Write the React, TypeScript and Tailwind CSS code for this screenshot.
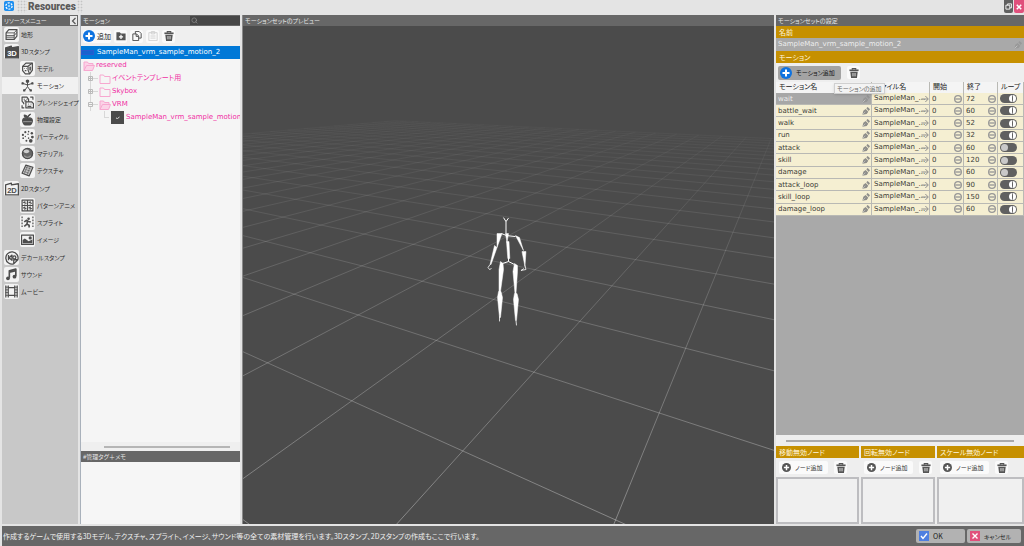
import React from "react";
import { Search } from "lucide-react";

type IconProps = { className?: string };

const LATIN = "font-['DejaVu_Sans','Noto_Sans_CJK_JP',sans-serif]";

/* ---------- icons ---------- */

const Svg = ({ className = "size-[13px]", children }: { className?: string; children: React.ReactNode }) => (
  <svg viewBox="0 0 24 24" className={`${className} shrink-0`} fill="none" stroke="currentColor" strokeWidth={2.2} strokeLinejoin="round" aria-hidden="true">
    {children}
  </svg>
);

const TerrainIcon = () => (
  <Svg>
    <path d="M2 9l5-6h15v12l-5 6H2z" />
    <path d="M2 9h15v12M17 9l5-6M2 14h15l5-6M2 17h15" strokeWidth={1.6} />
  </Svg>
);

const StampIcon = ({ label, filled }: { label: string; filled?: boolean }) => (
  <Svg className="size-[14px]">
    <path d="M1 22V5l10-3v3l12-2v19z" fill={filled ? "currentColor" : "none"} />
    <text x="12" y="19" fontSize="13" fontWeight="700" textAnchor="middle" fill={filled ? "#fff" : "currentColor"} stroke="none" fontFamily="Liberation Sans, sans-serif">
      {label}
    </text>
  </Svg>
);

const ModelIcon = () => (
  <Svg>
    <path d="M3 8l6-6h12v13l-5 7H8l-5-6z" />
    <path d="M13 8h-10M13 8l8-6M13 8v7l3 7" />
    <path d="M16 9h2v6h-2z" fill="currentColor" strokeWidth={1} />
    <path d="M6 12h1M10 12h1M7 16h3" />
  </Svg>
);

const MotionIcon = () => (
  <Svg>
    <circle cx="12" cy="4" r="2.200" fill="currentColor" />
    <path d="M12 6v8M3 8l9 3 9-3M12 14l-5 7M12 14l5 7" strokeWidth={1.8} />
    <path d="M2 7h2v2H2zM20 7h2v2h-2zM5 20h2v2H5zM17 20h2v2h-2z" fill="currentColor" />
  </Svg>
);

const BlendIcon = () => (
  <Svg>
    <path d="M2 10V2h9l3 4v4M2 10l3 3v2M5 6h2M10 6h2M6 9h4M9 22V11h11l3 3v8zM13 15h1M18 15h1M12 19h7M17 2h5v5M2 17v5h4" />
  </Svg>
);

const PhysicsIcon = () => (
  <Svg>
    <path d="M3 14c0-5 5-6 9-4 4-2 9-1 9 4 0 4-3 8-5 8H8c-2 0-5-4-5-8z" fill="currentColor" />
    <path d="M12 10c0-4 2-6 6-8M11 8C8 8 6 6 6 4c3 0 5 1 5 4z" fill="currentColor" />
    <path d="M4 16h16" stroke="#aaa" strokeWidth={1.5} />
  </Svg>
);

const ParticleIcon = () => (
  <Svg>
    <g fill="currentColor" stroke="none">
      <circle cx="3.500" cy="9" r="2" />
      <circle cx="8" cy="4" r="2" />
      <circle cx="14" cy="3" r="1.400" />
      <circle cx="20" cy="6" r="2.200" />
      <circle cx="21" cy="13" r="2.600" />
      <circle cx="18" cy="20" r="3.400" />
      <circle cx="10" cy="20" r="1.800" />
      <circle cx="4" cy="15" r="1.600" />
      <circle cx="14" cy="15" r="1.400" />
      <circle cx="13" cy="8" r="1.400" />
      <circle cx="8" cy="12" r="1.200" />
    </g>
  </Svg>
);

const MaterialIcon = () => (
  <Svg>
    <circle cx="12" cy="12" r="9.500" fill="#666" />
    <ellipse cx="10" cy="8" rx="5" ry="3.600" fill="#ccc" stroke="none" />
    <path d="M6 16c3 4 9 4 12 0" stroke="#999" />
  </Svg>
);

const TextureIcon = () => (
  <Svg>
    <path d="M9 2l13 4-7 16L2 17z" fill="#c8c8c8" />
    <path d="M9 6l9 3M8 10l9 3M6 14l9 3M12 3L6 18M17 5l-6 15" strokeWidth={1} />
  </Svg>
);

const PatternIcon = () => (
  <Svg>
    <path d="M2 2h20v20H2zM12 2v20M2 12h20" />
    <path d="M7 4v6M4 6l6 2M17 4v6M14 6l6 2M7 14v6M4 16l6 2M17 14v6M14 16l6 2" />
  </Svg>
);

const SpriteIcon = () => (
  <Svg>
    <path d="M2 1v22M22 1v22" strokeDasharray="3 2.500" />
    <circle cx="14" cy="5" r="2.400" fill="currentColor" stroke="none" />
    <path d="M6 11l4-3 4 2 4 1M12 9l-1 6 4 2v4M11 15l-5 4" strokeWidth={3} />
  </Svg>
);

const ImageIcon = () => (
  <Svg>
    <path d="M1 4h22v17H1z" />
    <path d="M3 19v-6l4-3 4 3 3 2 7-3v7z" fill="currentColor" stroke="none" />
    <circle cx="17" cy="9" r="3" fill="currentColor" stroke="none" />
  </Svg>
);

const DecalIcon = () => (
  <Svg className="size-[14px]">
    <path d="M15 22a10.500 10.500 0 1 1 7-7zM15 22v-7h7" />
    <path d="M6 7v9M12 7v9l-5-4.500z" />
    <circle cx="16" cy="11" r="2.600" />
  </Svg>
);

const SoundIcon = () => (
  <Svg>
    <path d="M8 18V5l12-3v13M8 8l12-3" strokeWidth={3} />
    <circle cx="5.500" cy="19" r="3.500" fill="currentColor" stroke="none" />
    <circle cx="17.500" cy="16" r="3.500" fill="currentColor" stroke="none" />
  </Svg>
);

const MovieIcon = () => (
  <Svg>
    <path d="M6 1v22M18 1v22M6 5h12M6 19h12M1.500 1v22M22.500 1v22" />
    <path d="M1 4h5M1 9h5M1 14h5M1 19h5M18 4h5M18 9h5M18 14h5M18 19h5" strokeWidth={1.6} />
  </Svg>
);

const AppLogo = () => (
  <svg viewBox="0 0 24 24" className="mt-px size-[10px]" aria-hidden="true">
    <rect width="24" height="24" rx="4" fill="#1e8ff0" />
    <circle cx="12" cy="12" r="7.500" fill="none" stroke="#fff" strokeWidth="3" strokeDasharray="5 2.800" />
    <circle cx="12" cy="12" r="3" fill="#8fd0ff" />
  </svg>
);

const PlusDisc = ({ className = "size-3", color }: IconProps & { color: string }) => (
  <svg viewBox="0 0 24 24" className={`${className} shrink-0`} aria-hidden="true">
    <circle cx="12" cy="12" r="12" fill={color} />
    <path d="M12 5v14M5 12h14" stroke="#fff" strokeWidth="4" />
  </svg>
);

const TrashIcon = () => (
  <svg viewBox="0 0 24 24" className="size-[10px]" fill="none" stroke="currentColor" aria-hidden="true">
    <path d="M1 5.500h22" strokeWidth="4" />
    <path d="M8 4V1.500h8V4" strokeWidth="3" />
    <path d="M3 9h18l-2 15H5z" fill="currentColor" stroke="none" />
    <path d="M9 12v8M12 12v8M15 12v8" stroke="#eee" strokeWidth="1.500" />
  </svg>
);

const FolderAddIcon = () => (
  <svg viewBox="0 0 24 24" className="size-[10px]" aria-hidden="true">
    <path d="M1 3h8l3 3h11v16H1z" fill="#555" />
    <path d="M12 9v10M7 14h10" stroke="#fff" strokeWidth="3" />
  </svg>
);

const DuplicateIcon = () => (
  <Svg className="size-[10px]">
    <path d="M8 7V1h9l5 5v11h-6M2 7h9l5 5v11H2zM10 7v6h6" strokeWidth={2.4} />
  </Svg>
);

const PasteIcon = () => (
  <Svg className="size-[10px]">
    <path d="M2 4h20v19H2zM8 1h8v6H8zM6 12h12M6 17h12" />
  </Svg>
);

const Folder = ({ open }: { open?: boolean }) => (
  <svg viewBox="0 0 24 24" className="size-3 shrink-0" fill="none" stroke="#f7a8d0" strokeWidth={2} strokeLinejoin="round" aria-hidden="true">
    {open ? <path d="M2 21V4h7l2 3h9v4M2 21l5-10h16l-4 10z" fill="#fbd3e7" /> : <path d="M2 21V4h7l2 3h11v14z" />}
  </svg>
);

const Pencil = ({ className = "" }: IconProps) => (
  <svg viewBox="0 0 24 24" className={`size-2 shrink-0 ${className}`} fill="currentColor" aria-hidden="true">
    <path d="M1 23l3-12 7-5 8 8-5 7zM13 4l4-4 7 7-4 5z" />
    <path d="M2 22l8-8" stroke="#fff" strokeOpacity="0.600" strokeWidth="2" />
  </svg>
);

const Spinner = () => (
  <svg viewBox="0 0 24 24" className="size-2 shrink-0" aria-hidden="true">
    <circle cx="12" cy="12" r="10" fill="none" stroke="#979797" strokeWidth="4" />
    <path d="M4 12h16" stroke="#979797" strokeWidth="4" />
  </svg>
);

const ArrowRight = () => (
  <svg viewBox="0 0 24 24" className="size-2 shrink-0" fill="none" stroke="#8f8f8f" strokeWidth="3" aria-hidden="true">
    <path d="M1 12h20M13 3l9 9-9 9" />
  </svg>
);

/* ---------- shared pieces ---------- */

const TitleStrip = ({ children }: { children: React.ReactNode }) => (
  <div className="flex h-[11px] shrink-0 items-center bg-[#676767] pl-[2px] text-[6px] leading-none text-[#e6e6e6]">{children}</div>
);

const GoldBand = ({ children }: { children: React.ReactNode }) => (
  <h3 className="flex h-3 shrink-0 items-center bg-[#c69000] pl-[3px] text-[7px] leading-none whitespace-nowrap text-[#fff6dc]">{children}</h3>
);

const ToolButton = ({ label, className = "text-[#555]", children }: { label: string; className?: string; children: React.ReactNode }) => (
  <button type="button" aria-label={label} className={`flex size-[13px] items-center justify-center rounded-xs bg-[#fafafa] ${className}`}>
    {children}
  </button>
);

/* ---------- left menu ---------- */

type Item = { label: string; icon: React.ReactNode; active?: boolean; children?: Item[] };

const MENU: Item[] = [
  { label: "地形", icon: <TerrainIcon /> },
  {
    label: "3Dスタンプ",
    icon: <StampIcon label="3D" filled />,
    children: [
      { label: "モデル", icon: <ModelIcon /> },
      { label: "モーション", icon: <MotionIcon />, active: true },
      { label: "ブレンドシェイプ", icon: <BlendIcon /> },
      { label: "物理設定", icon: <PhysicsIcon /> },
      { label: "パーティクル", icon: <ParticleIcon /> },
      { label: "マテリアル", icon: <MaterialIcon /> },
      { label: "テクスチャ", icon: <TextureIcon /> },
    ],
  },
  {
    label: "2Dスタンプ",
    icon: <StampIcon label="2D" />,
    children: [
      { label: "パターンアニメ", icon: <PatternIcon /> },
      { label: "スプライト", icon: <SpriteIcon /> },
      { label: "イメージ", icon: <ImageIcon /> },
    ],
  },
  { label: "デカールスタンプ", icon: <DecalIcon /> },
  { label: "サウンド", icon: <SoundIcon /> },
  { label: "ムービー", icon: <MovieIcon /> },
];

const MenuRow = ({ item, nested }: { item: Item; nested?: boolean }) => (
  <a
    href="#"
    className={`flex h-[17px] items-center gap-[2px] text-[6px] whitespace-nowrap text-[#2e2e2e] ${nested ? "pl-[18px]" : "pl-[2px]"} ${item.active ? "bg-[#f1f1f1]" : ""}`}
  >
    <span className="flex size-[15px] shrink-0 items-center justify-center rounded-xs bg-[#f3f3f3] text-[#4d4d4d]">{item.icon}</span>
    {item.label}
  </a>
);

const SideMenu = () => (
  <nav className="flex w-[76px] shrink-0 flex-col bg-[#c8c8c8]">
    <TitleStrip>
      <span className="flex-1">リソースメニュー</span>
      <button type="button" aria-label="閉じる" className="mr-px flex h-[9px] w-[7px] items-center justify-center bg-[#e8e8e8] text-[#555]">
        <svg viewBox="0 0 8 10" className="h-2 w-[6px]" fill="none" stroke="currentColor" strokeWidth="1.600" aria-hidden="true">
          <path d="M6 1L2 5l4 4" />
        </svg>
      </button>
    </TitleStrip>
    <ul>
      {MENU.map((item) => (
        <li key={item.label}>
          <MenuRow item={item} />
          {item.children && (
            <ul className="mb-px">
              {item.children.map((c) => (
                <li key={c.label}>
                  <MenuRow item={c} nested />
                </li>
              ))}
            </ul>
          )}
        </li>
      ))}
    </ul>
  </nav>
);

/* ---------- motion list ---------- */

const Expander = ({ sign }: { sign: "+" | "-" }) => (
  <svg viewBox="0 0 10 13" className="h-[13px] w-[10px] shrink-0" fill="none" stroke="#bbb" aria-hidden="true">
    <path d="M2.500 0v4M2.500 9v4M5 6.500h5" stroke="#d8d8d8" />
    <path d="M0.500 4.500h4v4h-4zM1 6.500h3" />
    {sign === "+" && <path d="M2.500 5v3" />}
  </svg>
);

const MotionList = () => (
  <section className="flex w-40 shrink-0 flex-col border-l border-[#a9b1bb] bg-[#f5f5f5]">
    <TitleStrip>
      <span className="flex-1">モーション</span>
      <label className="flex h-[9px] w-[50px] items-center bg-[#464646] pl-px text-[#999]">
        <Search className="size-[7px] shrink-0" />
        <input aria-label="検索" className="w-full min-w-0 bg-transparent outline-none" />
      </label>
    </TitleStrip>
    <div className="flex h-5 shrink-0 items-center gap-[3px] bg-[#efefef] pl-[2px]">
      <button type="button" className="flex h-[13px] items-center gap-[2px] rounded-xs bg-[#fafafa] text-[7px] text-[#222]">
        <PlusDisc color="#0f73e0" />
        追加
      </button>
      <ToolButton label="フォルダ追加">
        <FolderAddIcon />
      </ToolButton>
      <ToolButton label="複製">
        <DuplicateIcon />
      </ToolButton>
      <ToolButton label="貼り付け" className="text-[#d0d0d0]">
        <PasteIcon />
      </ToolButton>
      <ToolButton label="削除">
        <TrashIcon />
      </ToolButton>
    </div>
    <ul className={`min-h-0 flex-1 overflow-hidden text-[7px] leading-[13px] whitespace-nowrap text-[#f02fa4] ${LATIN}`}>
      <li className="flex items-center gap-px bg-[#0078d7] text-white">
        <span className="flex h-[5px] w-[13px] shrink-0 items-center justify-center border border-[#2a5bd0] bg-[#1763cf]" />
        <span className="pl-[2px]">SampleMan_vrm_sample_motion_2</span>
      </li>
      <li className="flex items-center gap-px pl-[2px]">
        <Folder open />
        reserved
      </li>
      <li className="flex items-center gap-[1px] pl-[7px]">
        <Expander sign="+" />
        <Folder />
        イベントテンプレート用
      </li>
      <li className="flex items-center gap-[1px] pl-[7px]">
        <Expander sign="+" />
        <Folder />
        Skybox
      </li>
      <li className="flex items-center gap-[1px] pl-[7px]">
        <Expander sign="-" />
        <Folder open />
        VRM
      </li>
      <li className="flex items-center gap-[2px] pl-[23px]">
        <span className="mb-[6px] h-[7px] w-[5px] shrink-0 border-b border-l border-[#d8d8d8]" />
        <svg viewBox="0 0 13 13" className="size-[13px] shrink-0" aria-hidden="true">
          <rect width="13" height="13" fill="#4b4b4b" />
          <path d="M5 7l1.500 0.500 2-1.500" stroke="#ddd" fill="none" />
        </svg>
        SampleMan_vrm_sample_motion
      </li>
    </ul>
    <div className="flex h-[9px] shrink-0 items-center bg-[#efefef] pr-[10px] pl-[23px]">
      <div className="h-[2px] flex-1 bg-[#b5b5b5]" />
    </div>
    <div className="flex h-[73px] shrink-0 flex-col">
      <TitleStrip>
        <label htmlFor="memo">#管理タグ＋メモ</label>
      </TitleStrip>
      <textarea id="memo" className="w-full flex-1 resize-none bg-[#f6f6f6] outline-none" />
    </div>
  </section>
);

/* ---------- preview ---------- */

/* Ground-plane cell (i, j) to view coordinates. */
const project = (i: number, j: number): string => {
  const w = 1 + 0.1888 * i + 0.3265 * j;
  const x = (374.3 - 111.4 * i + 180.2 * j) / w - 1;
  const y = (430.9 - 0.83 * i - 1.45 * j) / w + 64;
  return `${x.toFixed(2)} ${y.toFixed(2)}`;
};

const GRID_FAR = 22;
const GRID_LINES = Array.from({ length: GRID_FAR + 2 }, (_, k) => k - 1);

const Preview = () => (
  <section className="flex min-w-0 flex-1 flex-col border-l border-[#8a8a8a] bg-[#4b4b4b]">
    <TitleStrip>モーションセットのプレビュー</TitleStrip>
    <div className="min-h-0 flex-1">
      <svg viewBox="0 0 532 499" preserveAspectRatio="xMidYMid slice" className="size-full" role="img" aria-label="プレビュー">
        <defs>
          <linearGradient id="fade" gradientUnits="userSpaceOnUse" x1="0" y1="95" x2="0" y2="499">
            <stop offset="0" stopColor="#fff" stopOpacity="0.020" />
            <stop offset="0.200" stopColor="#fff" stopOpacity="0.080" />
            <stop offset="0.500" stopColor="#fff" stopOpacity="0.200" />
            <stop offset="1" stopColor="#fff" stopOpacity="0.340" />
          </linearGradient>
        </defs>
        <g stroke="url(#fade)" strokeWidth="1">
          {GRID_LINES.map((k) => (
            <path key={k} d={`M${project(k, -1)}L${project(k, GRID_FAR)}M${project(-1, k)}L${project(GRID_FAR, k)}`} />
          ))}
        </g>
        <g transform="translate(227 179)" fill="#fff" stroke="#fff" strokeWidth="0.500" strokeLinejoin="round">
          <path d="M34 13l2.500 4 2.500-3.500M36.500 17v12" fill="none" strokeWidth="1" />
          <path d="M36 29h3l-1.500 9zM37 37h2.500l0.800 17h-2zM27.500 29h5l-5 14zM46 31l4 2 4 13zM25 41l2.500 2-6 17-1 0zM52.500 47h4l-1 15z" />
          <path d="M32 29l5 2 9 1M39 57l-6 2M39 57l6 3M39 53v4" fill="none" strokeWidth="1" />
          <path d="M31 57l2.500 2 0.500 6-3 22-1.500 0 0-22zM45 59l3 2 0 6-1.500 22-1 0-2-22zM29 87h2.500l1.500 6-2 20h-1l-2-20zM45 89h2.500l1.500 6-2 21h-1l-2-21z" />
          <path d="M20.500 60l-2 3 1.500 2 2-1M55.500 61l1 4-5 1 3-2M30 112v5M46.500 116l0.500 5" fill="none" strokeWidth="0.800" />
        </g>
      </svg>
    </div>
  </section>
);

/* ---------- settings ---------- */

const MOTIONS: [string, number, boolean][] = [
  ["wait", 72, true],
  ["battle_wait", 60, true],
  ["walk", 52, true],
  ["run", 32, true],
  ["attack", 60, false],
  ["skill", 120, false],
  ["damage", 60, false],
  ["attack_loop", 90, true],
  ["skill_loop", 150, true],
  ["damage_loop", 60, true],
];

const cell = "border-r border-b border-[#b9b9b4] p-0 pl-[2px]";
const field = "block w-full min-w-0 flex-1 bg-transparent outline-none";

const MotionTable = () => (
  <table className={`h-[134px] w-full shrink-0 table-fixed border-collapse text-[7px] leading-none text-[#3c3c36] ${LATIN}`}>
    <colgroup>
      <col />
      <col className="w-[58px]" />
      <col className="w-[34px]" />
      <col className="w-[34px]" />
      <col className="w-[26px]" />
    </colgroup>
    <thead>
      <tr className="h-[11px] bg-[#f4f4f4] text-left text-[#222]">
        {["モーション名", "ファイル名", "開始", "終了", "ループ"].map((h) => (
          <th key={h} className="border-r border-[#b9b9b4] p-0 pl-[3px] font-normal whitespace-nowrap">
            {h}
          </th>
        ))}
      </tr>
    </thead>
    <tbody>
      {MOTIONS.map(([name, end, loop], n) => (
        <tr key={name} className="bg-[#f5efd2]">
          <td className={`${cell} ${n === 0 ? "bg-[#a7a7a7] text-[#ededed]" : ""}`}>
            <div className="flex items-center pr-px">
              <input aria-label="モーション名" defaultValue={name} className={field} />
              <Pencil className={n === 0 ? "text-[#969696]" : "text-[#8e8e8a]"} />
            </div>
          </td>
          <td className={cell}>
            <div className="flex items-center">
              <span className="min-w-0 flex-1 whitespace-nowrap">SampleMan_...</span>
              <ArrowRight />
            </div>
          </td>
          <td className={cell}>
            <div className="flex items-center pr-px">
              <input aria-label="開始" defaultValue="0" className={field} />
              <Spinner />
            </div>
          </td>
          <td className={cell}>
            <div className="flex items-center pr-px">
              <input aria-label="終了" defaultValue={end} className={field} />
              <Spinner />
            </div>
          </td>
          <td className={cell}>
            <input
              type="checkbox"
              aria-label="ループ"
              defaultChecked={loop}
              className="flex h-[9px] w-[17px] appearance-none items-center rounded-full bg-[#606060] px-px before:size-[7px] before:rounded-full before:bg-[#c9c9c9] before:content-[''] checked:justify-end checked:before:border-x-[3px] checked:before:border-white checked:before:bg-[#606060]"
            />
          </td>
        </tr>
      ))}
    </tbody>
  </table>
);

const NodePanel = ({ title }: { title: string }) => (
  <section className="flex min-w-0 flex-col">
    <GoldBand>{title}</GoldBand>
    <div className="flex h-[19px] items-center gap-[6px] pl-[3px]">
      <button type="button" className="flex h-[13px] w-[49px] items-center gap-1 rounded-xs bg-[#fafafa] px-[3px] text-[6px] whitespace-nowrap text-[#333]">
        <PlusDisc color="#555" className="size-[9px]" />
        ノード追加
      </button>
      <ToolButton label="削除">
        <TrashIcon />
      </ToolButton>
    </div>
    <div className="flex-1 border-2 border-[#bdbdc0] bg-[#f0f0f0]" />
  </section>
);

const Settings = () => (
  <aside className="flex w-[248px] shrink-0 flex-col bg-[#eeeeee]">
    <TitleStrip>モーションセットの設定</TitleStrip>
    <GoldBand>名前</GoldBand>
    <div className={`flex h-[13px] shrink-0 items-center bg-[#a9a9a9] pr-[2px] pl-[2px] text-[7px] text-[#ededed] ${LATIN}`}>
      <input aria-label="名前" defaultValue="SampleMan_vrm_sample_motion_2" className={field} />
      <Pencil className="text-[#999]" />
    </div>
    <GoldBand>モーション</GoldBand>
    <div className="flex h-[19px] shrink-0 items-center gap-[6px] pl-[2px]">
      <div className="relative">
        <button type="button" className="flex h-[14px] w-[63px] items-center gap-[4px] rounded-xs bg-[#a3a3a3] pl-[2px] text-[6px] whitespace-nowrap text-[#111]">
          <PlusDisc color="#0f73e0" />
          モーション追加
        </button>
        <div role="tooltip" className="absolute top-[17px] left-[56px] z-10 border border-[#d0d0d0] bg-[#f3f3f3] px-[2px] text-[6px] leading-[9px] whitespace-nowrap text-[#666] shadow-sm">
          モーションの追加
        </div>
      </div>
      <ToolButton label="削除">
        <TrashIcon />
      </ToolButton>
    </div>
    <MotionTable />
    <div className="min-h-0 flex-1 bg-[#a9a9a9]" />
    <div className="flex h-[11px] shrink-0 items-center px-[10px]">
      <div className="h-[2px] flex-1 bg-[#a9a9a9]" />
    </div>
    <div className="grid h-[78px] shrink-0 grid-cols-[83fr_74fr_87fr] gap-[2px]">
      <NodePanel title="移動無効ノード" />
      <NodePanel title="回転無効ノード" />
      <NodePanel title="スケール無効ノード" />
    </div>
  </aside>
);

/* ---------- page ---------- */

export default function App() {
  return (
    <div className="flex h-screen flex-col overflow-hidden bg-[#e4e4e4] font-['Noto_Sans_CJK_JP',sans-serif] [font-feature-settings:'palt']">
      <header className="flex h-[15px] shrink-0 items-start pl-1">
        <AppLogo />
        <div className="ml-[3px] flex h-[13px] w-[66px] items-center bg-[radial-gradient(#c4c4c4_40%,transparent_50%)] bg-[size:3px_3px] pl-[10px]">
          <h1 className="bg-[#e4e4e4] px-px font-['Roboto',sans-serif] text-[10px] leading-[13px] font-black text-[#5a5a5a]">Resources</h1>
        </div>
        <div className="flex-1" />
        <button type="button" aria-label="元に戻す" className="flex h-[13px] w-[9px] items-center justify-center rounded-b-xs bg-[#606060] text-white">
          <svg viewBox="0 0 8 8" className="size-[7px]" fill="none" stroke="currentColor" aria-hidden="true">
            <path d="M1 2.500h4.500V7H1zM3 2.500V1h4.500v4.500h-2" />
          </svg>
        </button>
        <button type="button" aria-label="閉じる" className="ml-px flex h-[13px] w-[10px] items-center justify-center rounded-b-xs bg-[#e0507c] text-white">
          <svg viewBox="0 0 8 8" className="size-[6px]" fill="none" stroke="currentColor" strokeWidth="2" aria-hidden="true">
            <path d="M1 1l6 6M7 1L1 7" />
          </svg>
        </button>
      </header>
      <main className="flex min-h-0 flex-1 gap-[2px] pl-[2px]">
        <SideMenu />
        <MotionList />
        <Preview />
        <Settings />
      </main>
      <footer className="mt-[2px] ml-[2px] flex h-5 shrink-0 items-center gap-[2px] bg-[#676767] pr-[3px] text-[7px] text-[#f0f0f0]">
        <p className="flex-1 pl-px whitespace-nowrap">
          作成するゲームで使用する3Dモデル、テクスチャ、スプライト、イメージ、サウンド等の全ての素材管理を行います。3Dスタンプ、2Dスタンプの作成もここで行います。
        </p>
        <button type="button" className="flex h-[14px] w-[49px] items-center gap-1 rounded-xs bg-[#b2b2b2] pl-[3px] text-[#222]">
          <svg viewBox="0 0 10 10" className="size-[10px]" aria-hidden="true">
            <rect width="10" height="10" fill="#4f7fe0" />
            <path d="M2 5l2 2.500 4-5" fill="none" stroke="#fff" strokeWidth="1.400" />
          </svg>
          OK
        </button>
        <button type="button" className="flex h-[14px] w-[54px] items-center gap-1 rounded-xs bg-[#b2b2b2] pl-[3px] text-[6px] whitespace-nowrap text-[#222]">
          <svg viewBox="0 0 10 10" className="size-[10px] shrink-0" aria-hidden="true">
            <rect width="10" height="10" fill="#e0507c" />
            <path d="M2.500 2.500l5 5M7.500 2.500l-5 5" stroke="#fff" strokeWidth="1.400" />
          </svg>
          キャンセル
        </button>
      </footer>
    </div>
  );
}
